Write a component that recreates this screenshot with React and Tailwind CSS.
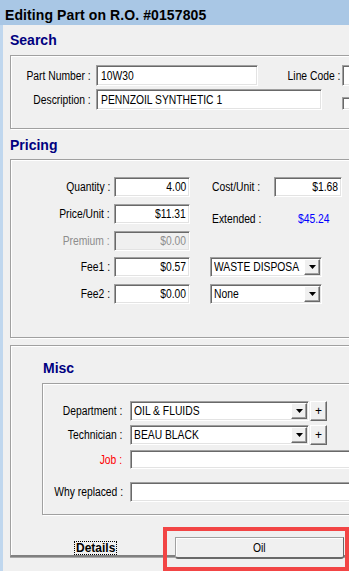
import React from "react";

const SUNKEN =
  "border border-t-[#a0a0a0] border-l-[#a0a0a0] border-b-white border-r-white shadow-[inset_1px_1px_0_#696969,inset_-1px_-1px_0_#e3e3e3]";
const RAISED =
  "border border-t-white border-l-white border-b-[#696969] border-r-[#696969] shadow-[inset_-1px_-1px_0_#a0a0a0]";
const GROUP =
  "border border-[#a0a0a0] shadow-[inset_1px_1px_0_#ffffff,1px_1px_0_#ffffff]";

function NL({ children }) {
  return (
    <span className="inline-block whitespace-nowrap scale-x-[0.86] origin-left">
      {children}
    </span>
  );
}
function NR({ children }) {
  return (
    <span className="inline-block whitespace-nowrap scale-x-[0.86] origin-right">
      {children}
    </span>
  );
}
function NC({ children }) {
  return (
    <span className="inline-block whitespace-nowrap scale-x-[0.86] origin-center">
      {children}
    </span>
  );
}

function Field({ className = "", children, right, disabled }) {
  return (
    <div
      className={`${SUNKEN} ${
        disabled ? "bg-[#f0f0f0] text-[#8d8d8d]" : "bg-white text-black"
      } flex items-center shrink-0 overflow-hidden ${
        right ? "justify-end pr-[3px]" : "pl-[4px]"
      } ${className}`}
    >
      {children ? right ? <NR>{children}</NR> : <NL>{children}</NL> : null}
    </div>
  );
}

function Label({ className = "", children }) {
  return (
    <div className={`text-right whitespace-nowrap shrink-0 ${className}`}>
      <NR>{children}</NR>
    </div>
  );
}

function LeftLabel({ className = "", children }) {
  return (
    <div className={`text-left whitespace-nowrap shrink-0 ${className}`}>
      <NL>{children}</NL>
    </div>
  );
}

function DropBtn() {
  return (
    <div
      className={`${RAISED} w-[16px] h-[16px] bg-[#f0f0f0] flex items-center justify-center shrink-0`}
    >
      <svg width="7" height="4" viewBox="0 0 7 4">
        <path d="M0 0H7L3.5 4Z" fill="#000" />
      </svg>
    </div>
  );
}

function Select({ className = "", value }) {
  return (
    <div
      className={`${SUNKEN} bg-white flex items-center shrink-0 p-[1px] ${className}`}
    >
      <span className="flex-1 pl-[2px] overflow-hidden whitespace-nowrap">
        <NL>{value}</NL>
      </span>
      <DropBtn />
    </div>
  );
}

function PlusBtn() {
  return (
    <div
      className={`${RAISED} w-[17px] h-[20px] bg-[#f0f0f0] flex items-center justify-center shrink-0 ml-[1px]`}
    >
      <span className="text-[12px] leading-none font-['Liberation_Sans',Arial,sans-serif]">
        +
      </span>
    </div>
  );
}

function Heading({ children, className = "" }) {
  return (
    <div
      className={`text-[14px] leading-[16px] font-bold text-[#000080] font-['Liberation_Sans',Arial,sans-serif] ${className}`}
    >
      {children}
    </div>
  );
}

export default function App() {
  return (
    <div className="relative w-[349px] h-[571px] overflow-hidden bg-[#f0f0f0] flex flex-col text-[12px] leading-[14px] text-black font-['Liberation_Sans',Arial,sans-serif]">
      {/* Title bar */}
      <div className="h-[25px] shrink-0 bg-[#a9c7e5] pl-[5px] pt-[7px]">
        <div className="text-[14px] leading-[16px] font-bold whitespace-nowrap tracking-[0.1px]">
          Editing Part on R.O. #0157805
        </div>
      </div>

      <div className="flex flex-1 min-h-0">
        <div className="w-[3px] shrink-0 bg-[#c0d7ee]" />
        <div className="flex-1 min-w-0 pl-[7px]">
          {/* Search */}
          <Heading className="mt-[7px]">Search</Heading>
          <div className={`${GROUP} mt-[7px] h-[74px] w-[400px] pt-[9px]`}>
            <div className="flex items-center h-[21px]">
              <Label className="w-[80px]">Part Number :</Label>
              <Field className="ml-[5px] w-[162px] h-[21px]">10W30</Field>
              <Label className="w-[82px]">Line Code :</Label>
              <Field className="ml-[2px] w-[40px] h-[21px]" />
            </div>
            <div className="flex items-center h-[21px] mt-[3px]">
              <Label className="w-[80px]">Description :</Label>
              <Field className="ml-[5px] w-[226px] h-[21px]">
                PENNZOIL SYNTHETIC 1
              </Field>
              <div
                className={`${SUNKEN} bg-white w-[13px] h-[13px] ml-[20px] self-end shrink-0`}
              />
            </div>
          </div>

          {/* Pricing */}
          <Heading className="mt-[8px]">Pricing</Heading>
          <div className={`${GROUP} mt-[6px] h-[179px] w-[400px] pt-[17px]`}>
            <div className="flex items-center h-[20px]">
              <Label className="w-[99px]">Quantity :</Label>
              <Field right className="ml-[4px] w-[76px] h-[20px]">
                4.00
              </Field>
              <LeftLabel className="ml-[22px] w-[62px]">Cost/Unit :</LeftLabel>
              <Field right className="w-[68px] h-[20px]">
                $1.68
              </Field>
            </div>
            <div className="flex items-center h-[20px] mt-[7px]">
              <Label className="w-[99px]">Price/Unit :</Label>
              <Field right className="ml-[4px] w-[76px] h-[20px]">
                $11.31
              </Field>
              <div className="flex mt-[10px]">
                <LeftLabel className="ml-[22px] w-[86px]">Extended :</LeftLabel>
                <div className="text-[#0000ff] whitespace-nowrap">
                  <NL>$45.24</NL>
                </div>
              </div>
            </div>
            <div className="flex items-center h-[20px] mt-[7px]">
              <Label className="w-[99px] text-[#8d8d8d]">Premium :</Label>
              <Field right disabled className="ml-[4px] w-[76px] h-[20px]">
                $0.00
              </Field>
            </div>
            <div className="flex items-center h-[20px] mt-[6px]">
              <Label className="w-[99px]">Fee1 :</Label>
              <Field right className="ml-[4px] w-[76px] h-[20px]">
                $0.57
              </Field>
              <Select className="ml-[20px] w-[112px] h-[20px]" value="WASTE DISPOSA" />
            </div>
            <div className="flex items-center h-[20px] mt-[7px]">
              <Label className="w-[99px]">Fee2 :</Label>
              <Field right className="ml-[4px] w-[76px] h-[20px]">
                $0.00
              </Field>
              <Select className="ml-[20px] w-[112px] h-[20px]" value="None" />
            </div>
          </div>

          {/* Tab panel */}
          <div className="mt-[7px] w-[400px] h-[212px] flex flex-col border-l border-t border-[#a0a0a0] border-b-[2px] border-b-[#808080] shadow-[inset_1px_1px_0_#ffffff,0_1px_0_#a8a8a8] pl-[31px] pt-[14px]">
            <Heading className="ml-[1px]">Misc</Heading>
            <div className={`${GROUP} mt-[7px] h-[132px] w-[360px] pt-[17px]`}>
              <div className="flex items-center h-[20px]">
                <Label className="w-[79px]">Department :</Label>
                <Select className="ml-[8px] w-[179px] h-[20px]" value="OIL & FLUIDS" />
                <PlusBtn />
              </div>
              <div className="flex items-center h-[20px] mt-[4px]">
                <Label className="w-[79px]">Technician :</Label>
                <Select className="ml-[8px] w-[179px] h-[20px]" value="BEAU BLACK" />
                <PlusBtn />
              </div>
              <div className="flex items-center h-[19px] mt-[5px]">
                <Label className="w-[79px] text-[#ff0000]">Job :</Label>
                <Field className="ml-[8px] w-[240px] h-[19px]" />
              </div>
              <div className="flex items-center h-[20px] mt-[13px]">
                <Label className="w-[79px]">Why replaced :</Label>
                <Field className="ml-[8px] w-[240px] h-[20px]" />
              </div>
            </div>
            <div className="mt-auto ml-[32px] self-start border border-dotted border-black px-[1px] text-[12px] leading-[12px] font-bold">
              Details
            </div>
          </div>

          {/* Bottom tab strip */}
          <div className="flex -mt-[20px] pl-[165px]">
            <div className="relative z-10 w-[169px] h-[22px] bg-[#f0f0f0] border border-t-[#a0a0a0] border-l-[#a0a0a0] border-r-[#696969] border-b-[#696969] border-b-[2px] rounded-b-[3px] shadow-[inset_1px_1px_0_#ffffff] flex items-center justify-center">
              <NC>Oil</NC>
            </div>
          </div>
        </div>
      </div>

      {/* Annotation highlight */}
      <div className="absolute left-[163px] top-[527px] w-[186px] h-[44px] border-[4px] border-[#f24545] pointer-events-none" />
    </div>
  );
}
